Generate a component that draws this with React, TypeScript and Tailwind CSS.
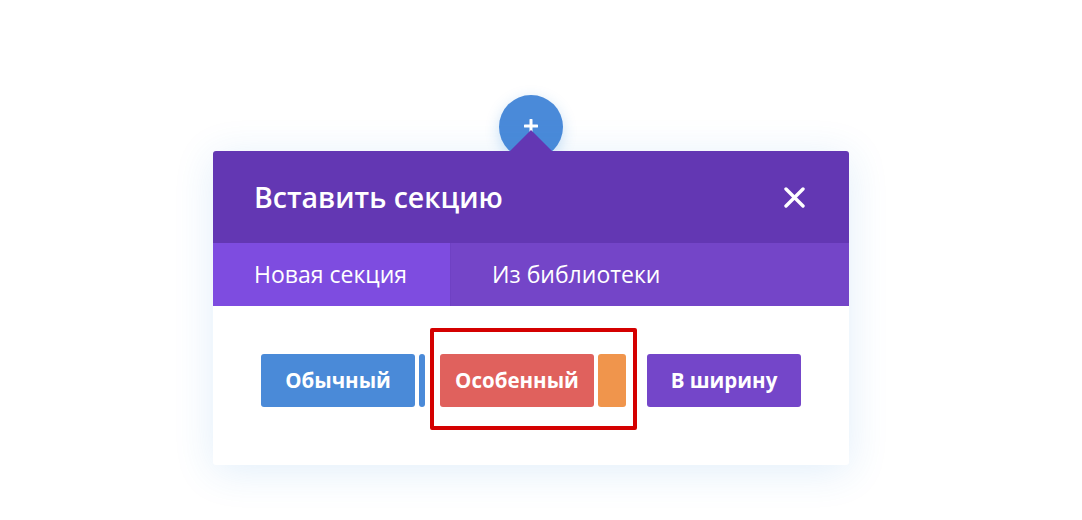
import React from "react";

export default function App() {
  return (
    <div
      className="w-[1082px] h-[520px] bg-white overflow-hidden"
      style={{ fontFamily: '"Open Sans", "Noto Sans", sans-serif' }}
    >
      <div className="pt-[95px] pl-[213px]">
        <div className="w-[636px] flex flex-col items-center">
          {/* add button circle */}
          <div className="w-[64px] h-[64px] rounded-full bg-[#4a8ad9] shadow-[0_4px_14px_rgba(43,135,218,0.25)] flex items-start justify-center pt-[24px]">
            <svg width="14" height="14" viewBox="0 0 14 14">
              <path d="M7 1v12M1 7h12" stroke="white" strokeWidth="3" strokeLinecap="round" />
            </svg>
          </div>
          {/* panel */}
          <div className="relative z-10 mt-[-8px] w-[636px] rounded-[3px] bg-white shadow-[0_6px_40px_rgba(43,135,218,0.14)]">
            {/* arrow */}
            <svg
              className="absolute left-[296px] top-[-21px]"
              width="44"
              height="22"
              viewBox="0 0 44 22"
            >
              <path d="M0 22 L22 0 L44 22 Z" fill="#6337b3" />
            </svg>
            {/* header */}
            <div className="h-[92px] bg-[#6337b3] rounded-t-[3px] flex items-center justify-between pl-[41px] pr-[44px]">
              <div className="text-white text-[28.5px] font-semibold leading-none">
                Вставить секцию
              </div>
              <svg width="21" height="21" viewBox="0 0 21 21">
                <path d="M2 2 L19 19 M19 2 L2 19" stroke="white" strokeWidth="3.4" strokeLinecap="round" />
              </svg>
            </div>
            {/* tabs */}
            <div className="h-[63px] flex bg-[#7445c8]">
              <div className="h-full flex items-center pl-[41px] pr-[43px] bg-[#7e4ce0] text-white text-[23px] leading-none border-r border-[#6f41c3]">
                Новая секция
              </div>
              <div className="h-full flex items-center px-[41px] text-white text-[23px] leading-none">
                Из библиотеки
              </div>
            </div>
            {/* body */}
            <div className="flex items-center justify-center pt-[48px] pb-[58px]">
              <div className="flex items-center gap-[4px]">
                <div className="w-[154px] h-[53px] rounded-[3px] bg-[#4a8ad8] flex items-center justify-center text-white text-[20.5px] font-bold leading-none">
                  Обычный
                </div>
                <div className="w-[6px] h-[53px] rounded-[3px] bg-[#4a8ad8]" />
              </div>
              <div className="relative ml-[15px] flex items-center gap-[4px]">
                <div className="w-[154px] h-[53px] rounded-[3px] bg-[#e0615d] flex items-center justify-center text-white text-[20.5px] font-bold leading-none">
                  Особенный
                </div>
                <div className="w-[28px] h-[53px] rounded-[3px] bg-[#f0954c]" />
                <div className="absolute left-[-10px] right-[-11px] top-[-26px] bottom-[-23px] border-[4px] border-[#d40000] rounded-[2px] pointer-events-none" />
              </div>
              <div className="ml-[21px] w-[154px] h-[53px] rounded-[3px] bg-[#7446c9] flex items-center justify-center text-white text-[20.5px] font-bold leading-none">
                В ширину
              </div>
            </div>
          </div>
        </div>
      </div>
    </div>
  );
}
